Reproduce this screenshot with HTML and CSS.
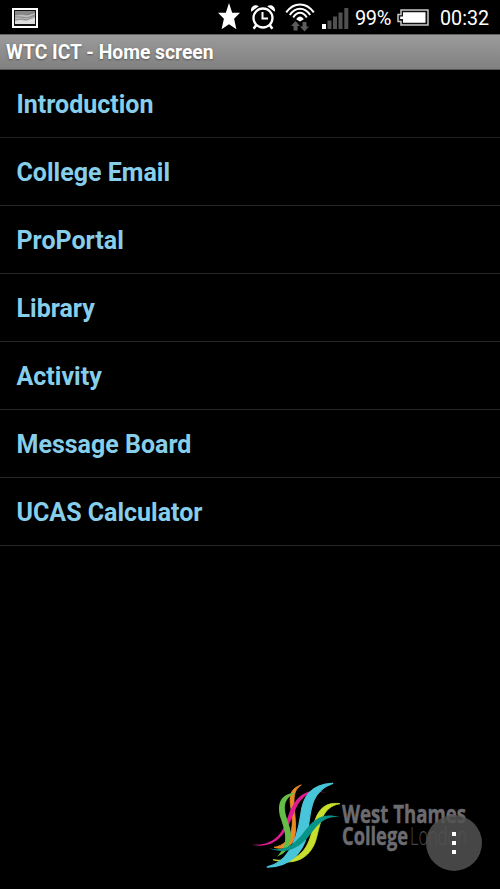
FILE: index.html
```html
<!DOCTYPE html>
<html lang="en">
<head>
<meta charset="utf-8">
<title>WTC ICT - Home screen</title>
<link rel="stylesheet" href="styles.css">
</head>
<body>
<div class="screen">
  <header class="status">
    <svg class="picture" width="26" height="20" viewBox="0 0 26 20">
      <rect width="26" height="20" fill="#fff"/>
      <rect x="2" y="2" width="22" height="16" fill="#111"/>
      <rect x="3" y="3" width="20" height="13" fill="#bbb"/>
      <path d="M3 3h20v2l-7 2-6-1-7 1z" fill="#888"/>
      <path d="M3 16v-3l5-1 5 1 10-3v6z" fill="#ddd"/>
      <path d="M3 7l6-1 6 1 8-3M3 9l6 0 6 1 8-3M3 12l7-1 5 1 8-4" fill="none" stroke="#777" stroke-width=".7"/>
    </svg>
    <svg class="star" width="22" height="27" viewBox="0 0 22 27"><path d="M11 0l3.200 9.800H22l-5.900 6 2.300 10.500L11 21.200l-7.400 5.100 2.300-10.500-5.900-6h7.800z" fill="#fff"/></svg>
    <svg class="alarm" width="26" height="26" viewBox="0 0 26 26" fill="none" stroke="#fff">
      <circle cx="13" cy="14" r="9.500" stroke-width="2.300"/>
      <path d="M12.500 8v6.500H18" stroke-width="2"/>
      <path d="M6.300 21l-2.700 3.800M19.700 21l2.700 3.800" stroke-width="2.500"/>
      <path d="M1.300 7.800C-.3 3.500 4.500-.4 8.800 2.200zM24.700 7.800C26.300 3.500 21.500-.4 17.200 2.200z" fill="#fff" stroke="none"/>
    </svg>
    <svg class="wifi" width="30" height="29" viewBox="0 0 30 29" fill="none" stroke="#fff" stroke-width="2">
      <path d="M1.200 9.400C8.500-1.300 21.500-1.300 28.800 9.400M4.800 12C10.400 3.500 19.600 3.500 25.200 12M8.200 14.500C12.400 8.300 17.600 8.300 21.800 14.500"/>
      <path d="M11.200 16.200C13.500 12.600 16.500 12.600 18.800 16.200L15 18.500z" fill="#fff" stroke="none"/>
      <path d="M10.500 18L15 23h-2.400v4.500H8.500V23H6zM19.500 28.500L24 23.500h-2.500V19h-4v4.500H15z" fill="#5b5b5b" stroke="none"/>
    </svg>
    <svg class="signal" width="27" height="21" viewBox="0 0 27 21"><path d="M0 16h4v5H0z" fill="#fff"/><path d="M5.500 12.500h4V21h-4zM11 8.500h4V21h-4zM16.500 4.500h4V21h-4zM22.300 0h4v21h-4z" fill="#505050"/></svg>
    <span class="percent">99%</span>
    <svg class="battery" width="32" height="17" viewBox="0 0 32 17"><path d="M4 1h27v15H4v-3.500H1v-7h3z" fill="#111" stroke="#c8c8c8" stroke-width="1.500"/><path d="M6 3.300h22.500v10.400H6v-3.700H3.200V7.500H6z" fill="#fff"/></svg>
    <time class="clock">00:32</time>
  </header>
  <h1 class="title">WTC ICT - Home screen</h1>
  <ul class="menu">
    <li>Introduction</li>
    <li>College Email</li>
    <li>ProPortal</li>
    <li>Library</li>
    <li>Activity</li>
    <li>Message Board</li>
    <li>UCAS Calculator</li>
  </ul>
  <footer class="footer">
    <svg class="logo" width="220" height="96" viewBox="250 778 220 96">
      <g transform="translate(240 770) scale(.33333)" stroke-width="2.500" stroke-linejoin="round">
        <path d="M184 45C145 56 148 88 154 122C160 158 162 222 102 232C132 241 158 228 164 202C172 160 160 118 162 90C163 68 168 55 184 45Z" fill="#e98a25" stroke="#e98a25"/>
        <path d="M36 224C88 227 118 205 136 162C154 112 172 44 260 68C214 60 185 76 168 115C147 164 122 244 36 224Z" fill="#e01b94"/>
        <path d="M167 68C118 70 110 106 122 145C132 177 152 220 111 260C151 246 158 207 149 172C141 139 113 93 167 68Z" fill="#63bd46"/>
        <path d="M300 101C246 94 230 130 219 171C209 214 193 283 99 269C164 289 208 264 226 215C240 173 241 110 300 101Z" fill="#c9df2d" stroke="#c9df2d"/>
        <path d="M278 40C213 43 188 79 182 137C174 192 152 276 82 291C149 292 189 247 201 194C213 137 204 66 278 40Z" fill="#49c5d9" stroke="#49c5d9" stroke-width="4"/>
        <path d="M301 142C245 124 218 151 192 186C166 219 140 246 87 235C132 253 168 242 204 202C231 166 252 134 301 142Z" fill="#079488"/>
      </g>
      <g class="brand"><text x="342" y="822.500" textLength="124" lengthAdjust="spacingAndGlyphs">West Thames</text><text x="342" y="844.500" textLength="66" lengthAdjust="spacingAndGlyphs">College</text></g>
      <text class="city" x="410" y="844.500" textLength="57" lengthAdjust="spacingAndGlyphs">London</text>
    </svg>
    <button class="more" aria-label="More options"><i></i><i></i><i></i></button>
  </footer>
</div>
</body>
</html>
```
FILE: styles.css
```css
* { box-sizing: border-box; }
body { margin: 0; background: #000; font-family: Roboto, sans-serif; }
.screen { width: 500px; height: 889px; display: flex; flex-direction: column; background: #000; overflow: hidden; }
.status { height: 34px; flex: none; display: flex; align-items: flex-start; padding-left: 12px; color: #fff; font-size: 20px; line-height: 24px; }
.status svg { flex: none; }
.picture { margin-top: 8px; }
.star { margin: 3px 0 0 180px; }
.alarm { margin: 4px 0 0 10px; }
.wifi { margin: 3px 0 0 9px; }
.signal { margin: 8px 0 0 7px; }
.percent { width: 42px; margin: 6px 0 0 6px; letter-spacing: -.4px; }
.battery { margin-top: 9px; }
.clock { margin: 7px 0 0 11px; white-space: nowrap; font-size: 19.7px; }
.title { height: 36px; flex: none; margin: 0; padding-left: 6px; border-top: 1px solid #665f5f; border-bottom: 1px solid #555; background: linear-gradient(#9b9b9b, #808080); color: #fff; font-size: 19.300px; font-weight: 700; line-height: 35px; text-shadow: 0 1px 2px #555; }
.menu { margin: 0; padding: 0; list-style: none; }
.menu li { height: 68px; padding: 0 16.500px; border-bottom: 1px solid #272727; color: #87ceeb; font-size: 25px; font-weight: 700; line-height: 70px; }
.menu li:first-child { border-bottom-color: #202020; }
.footer { flex: 1; display: flex; align-items: flex-end; padding: 0 0 15px 250px; }
.logo { flex: none; }
.brand { fill: #6c6b70; stroke: #6c6b70; stroke-width: .5px; font: 700 25px "Open Sans", sans-serif; }
.city { fill: #48484b; font: 300 25px "Open Sans", sans-serif; }
.more { flex: none; width: 56px; height: 56px; margin: 0 0 3px -44px; padding: 0; border: 0; border-radius: 50%; background: rgba(82, 82, 82, .86); display: flex; flex-direction: column; align-items: center; justify-content: center; gap: 5px; }
.more i { width: 4px; height: 4px; background: #fff; }
```
